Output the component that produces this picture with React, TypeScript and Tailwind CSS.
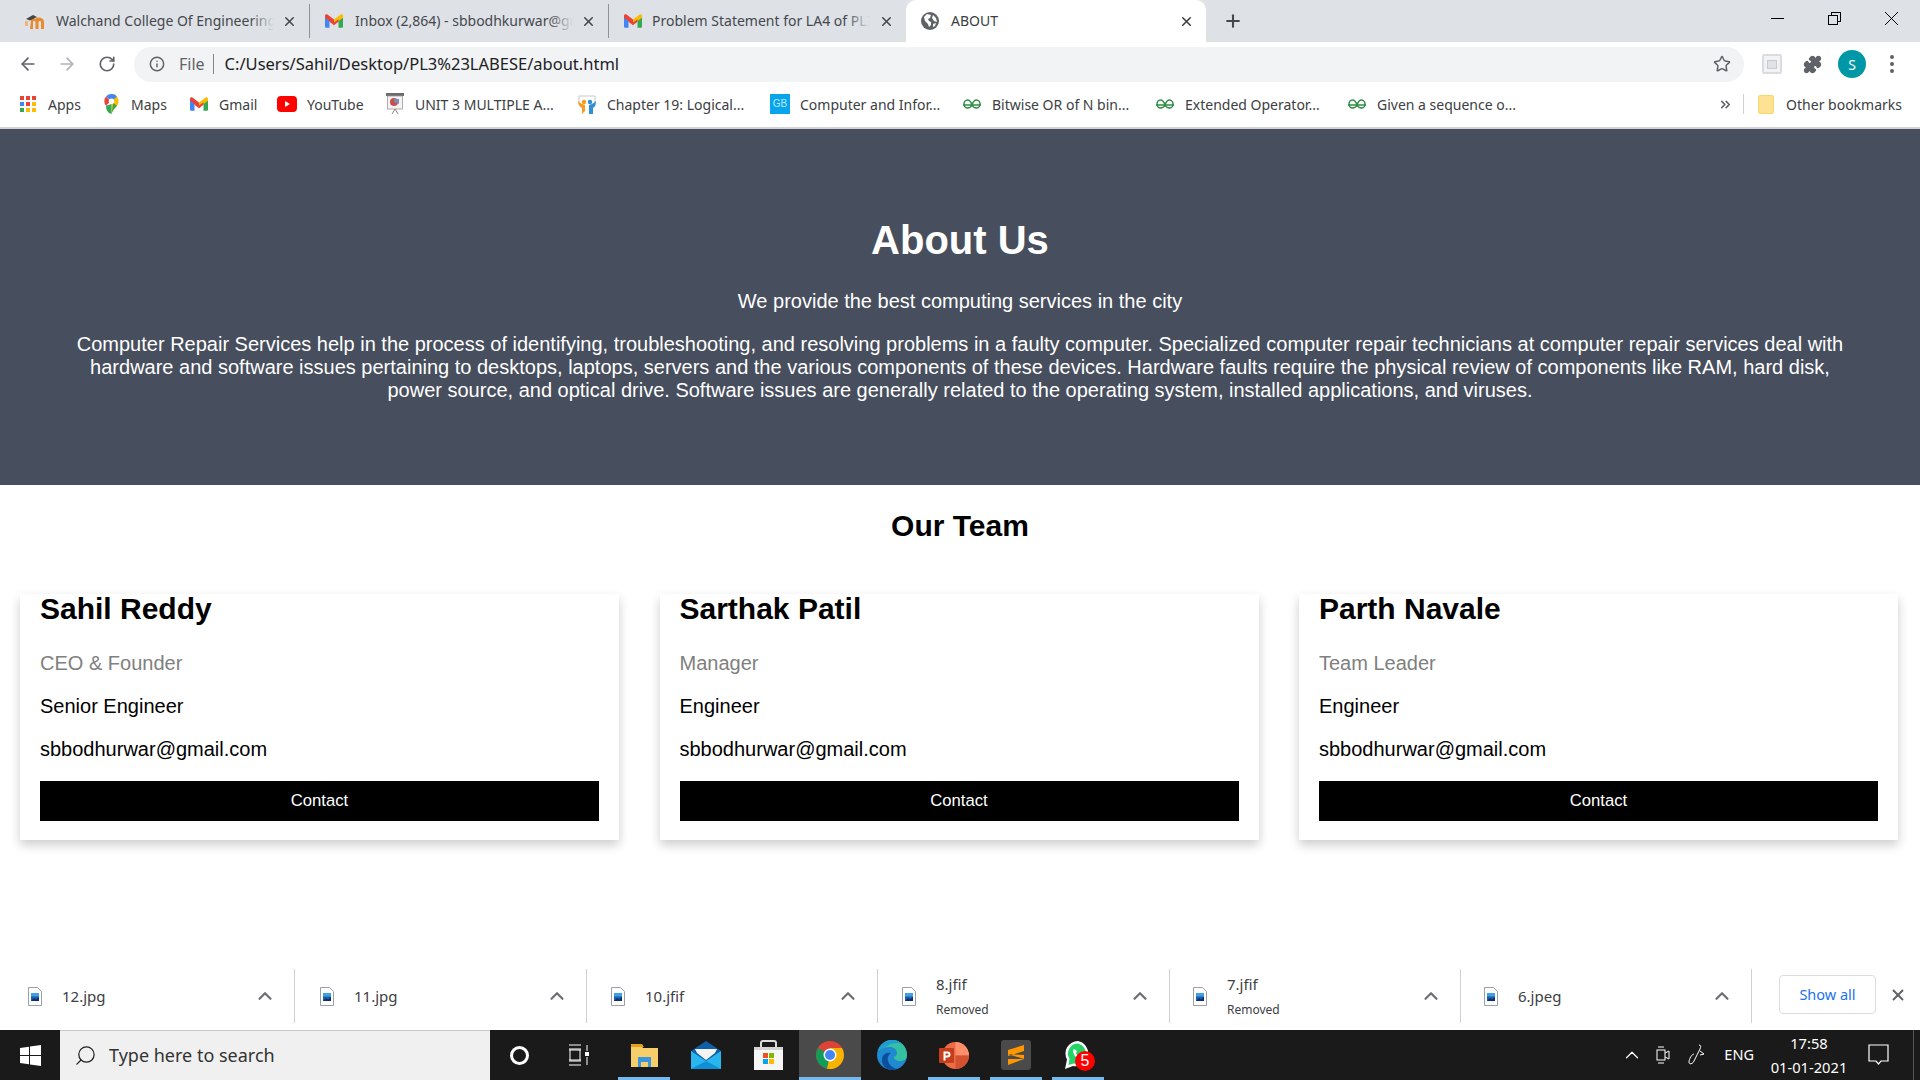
import React from 'react'
import { ArrowLeft, ArrowRight, RotateCw, Info, Star, Puzzle, X, Plus, ChevronUp, Search, ChevronsRight } from 'lucide-react'

const ui = "font-['Noto_Sans','Open_Sans',sans-serif]"
const page = "font-['Liberation_Sans',Arial,sans-serif]"

function GmailIcon({ size = 18 }: { size?: number }) {
  return (
    <svg width={size} height={size * 0.78} viewBox="0 0 24 18" className="shrink-0">
      <path d="M0 3v13.500A1.500 1.500 0 0 0 1.500 18H6V7z" fill="#4285f4" />
      <path d="M24 3v13.500a1.500 1.500 0 0 1-1.500 1.500H18V7z" fill="#34a853" />
      <path d="M6 9 0 4.500V2C0 .3 2-.6 3.300.4L12 7v5z" fill="#ea4335" />
      <path d="M18 9l6-4.500V2c0-1.700-2-2.600-3.300-1.600L12 7v5z" fill="#fbbc04" />
      <path d="M6 6.500l6 4.500 6-4.500V10l-6 4.500L6 10z" fill="#ea4335" />
    </svg>
  )
}

function MoodleIcon() {
  return (
    <svg width="20" height="18" viewBox="0 0 20 18" className="shrink-0">
      <path d="M6 8c1-2 3-2 4-1 1-1 4-2 6-1 2 .8 3 2 3 4v7h-3v-7c0-1.500-2.500-1.500-2.500 0v7h-3v-7c0-1.500-2.500-1.500-2.500 0v7H5z" fill="#e88a2e" />
      <path d="M1 7l7-4 4 2-7 3.500z" fill="#444" />
      <path d="M0 9h3v5H0z" fill="#f3b27a" />
    </svg>
  )
}

function GlobeIcon() {
  return (
    <svg width="18" height="18" viewBox="0 0 18 18" className="shrink-0">
      <circle cx="9" cy="9" r="9" fill="#5f6368" />
      <path d="M3 5l3-3 4 1-1 3-2 1 1 2 2 1v3l-2 2-1-3-3-3zM12 3l3 3 1 4-3-1-2-3zM12 12l3-1-1 3-2 1z" fill="#fff" />
    </svg>
  )
}

function AppsIcon() {
  const colors = ['#ea4335', '#ea4335', '#ea4335', '#4285f4', '#ea4335', '#fbbc04', '#34a853', '#fbbc04', '#fbbc04']
  return (
    <div className="grid grid-cols-3 gap-[2px] w-[17px] shrink-0">
      {colors.map((c, i) => (
        <span key={i} className="w-[4.300px] h-[4.300px]" style={{ backgroundColor: c }} />
      ))}
    </div>
  )
}

function MapsIcon() {
  return (
    <svg width="15" height="20" viewBox="0 0 16 22" className="shrink-0">
      <path d="M8 0a8 8 0 0 1 6 13c-2 2.500-5 5-6 9z" fill="#fbbc04" />
      <path d="M2 13a8 8 0 0 0 6 9V11z" fill="#34a853" />
      <path d="M14 13l-4-3-2 12c1-4 4-6.500 6-9z" fill="#34a853" />
      <path d="M2 2.700A8 8 0 0 0 2 13l5-5z" fill="#ea4335" />
      <path d="M2 2.700A8 8 0 0 1 8 0a8 8 0 0 1 6 2.700L8 8z" fill="#4285f4" />
      <circle cx="8" cy="8" r="3" fill="#fff" />
    </svg>
  )
}

function YoutubeIcon() {
  return (
    <svg width="20" height="16" viewBox="0 0 20 16" className="shrink-0">
      <rect width="20" height="16" rx="4" fill="#f00" />
      <path d="M8 5l5 3-5 3z" fill="#fff" />
    </svg>
  )
}

function SlideIcon() {
  return (
    <svg width="18" height="22" viewBox="0 0 18 22" className="shrink-0">
      <rect x="0" y="0" width="18" height="3" fill="#6b6b6b" />
      <rect x="1.500" y="3" width="15" height="13" fill="#f4f4f4" stroke="#999" strokeWidth=".8" />
      <circle cx="8" cy="9" r="4" fill="#c94f4f" />
      <path d="M8 9V6h5v5z" fill="#7a8fb5" />
      <path d="M9 16l-3 5M9 16l3 5" stroke="#888" />
    </svg>
  )
}

function ChapterIcon() {
  return (
    <svg width="18" height="22" viewBox="0 0 18 22" className="shrink-0">
      <path d="M1 9V3h16v6" fill="none" stroke="#c8c8c8" />
      <path d="M0 8c2 2 4 3 7 4v6c-1 1-2 2-3 3v-6C2 14 0 12 0 8z" fill="#f59a23" />
      <path d="M18 8c-2 2-4 3-7 4v9h4v-6c2-1 3-3 3-7z" fill="#2f8fd8" />
      <circle cx="6" cy="9" r="2.200" fill="#f59a23" />
      <circle cx="12" cy="9" r="2.200" fill="#2f8fd8" />
    </svg>
  )
}

function GfgIcon() {
  return (
    <svg width="18" height="10" viewBox="0 0 18 10" fill="none" stroke="#2f8d46" strokeWidth="1.500" className="shrink-0">
      <path d="M0 6h18" />
      <path d="M9 6C8 3 6 1 4.500 1 2.500 1 1 3 1 5s1.500 4 3.500 4C6.500 9 8 8 9 6c1 2 2.500 3 4.500 3 2 0 3.500-2 3.500-4s-1.500-4-3.500-4C12 1 10 3 9 6" />
    </svg>
  )
}

function BlueSquareIcon() {
  return (
    <div className="w-[20px] h-[20px] bg-[#08a5ec] flex items-center justify-center shrink-0">
      <span className={`${page} text-[#bfe8fb] text-[10px] leading-none`}>GB</span>
    </div>
  )
}

function FileIcon() {
  return (
    <svg width="14" height="19" viewBox="0 0 14 19" className="shrink-0">
      <path d="M.5.500h9l4 4v14H.5z" fill="#fff" stroke="#9aa0a6" />
      <rect x="3" y="6" width="8" height="8" fill="#1a5fa8" />
      <rect x="3" y="6" width="8" height="3.500" fill="#3fa0e8" />
      <path d="M3 14l3-3 2 1.500 3-2.500v4z" fill="#0d2f66" />
    </svg>
  )
}

function Tab({ title, icon }: { title: string; icon: React.ReactNode }) {
  return (
    <div className="w-[299px] h-[34px] flex items-center pl-[15px] pr-[12px] border-r border-[#8f9296]">
      <div className="w-[18px] flex items-center justify-center shrink-0">{icon}</div>
      <div className="relative ml-[12px] -mt-[1px] w-[218px] overflow-hidden whitespace-nowrap text-[14px] text-[#45484d]">
        {title}
        <span className="absolute right-0 top-0 bottom-0 w-[24px] bg-gradient-to-r from-transparent to-[#dee1e6]" />
      </div>
      <X size={15} strokeWidth={2.5} className="ml-auto text-[#45484d]" />
    </div>
  )
}

function TabStrip() {
  return (
    <div className="h-[42px] bg-[#dee1e6] flex items-center pl-[11px] shrink-0">
      <Tab title="Walchand College Of Engineering" icon={<MoodleIcon />} />
      <Tab title="Inbox (2,864) - sbbodhkurwar@gmail.com" icon={<GmailIcon />} />
      <div className="w-[297px] h-[34px] flex items-center pl-[15px] pr-[12px]">
        <div className="w-[18px] flex items-center justify-center shrink-0"><GmailIcon /></div>
        <div className="relative ml-[10px] -mt-[1px] w-[218px] overflow-hidden whitespace-nowrap text-[14px] text-[#45484d]">
          Problem Statement for LA4 of PL3
          <span className="absolute right-0 top-0 bottom-0 w-[24px] bg-gradient-to-r from-transparent to-[#dee1e6]" />
        </div>
        <X size={15} strokeWidth={2.5} className="ml-auto text-[#45484d]" />
      </div>
      <div className="w-[300px] h-[42px] bg-white rounded-t-[10px] flex items-center pl-[15px] pr-[12px]">
        <GlobeIcon />
        <span className="ml-[12px] -mt-[1px] text-[14px] text-[#3c4043]">ABOUT</span>
        <X size={15} strokeWidth={2.5} className="ml-auto text-[#3c4043]" />
      </div>
      <Plus size={20} strokeWidth={2.5} className="ml-[17px] text-[#45484d]" />
      <div className="ml-auto h-[42px] flex items-center pb-[6px] pr-[22px] gap-[44px]">
        <span className="w-[13px] h-px bg-black" />
        <div className="relative w-[13px] h-[13px]">
          <span className="absolute left-[3px] top-0 w-[10px] h-[10px] border border-black" />
          <span className="absolute left-0 top-[3px] w-[10px] h-[10px] border border-black bg-[#dee1e6]" />
        </div>
        <svg width="13" height="13" viewBox="0 0 13 13" stroke="#000" strokeWidth="1">
          <path d="M0 0l13 13M13 0L0 13" />
        </svg>
      </div>
    </div>
  )
}

function Toolbar() {
  return (
    <div className="h-[44px] bg-white flex items-center shrink-0 pl-[18px]">
      <ArrowLeft size={20} className="text-[#5f6368]" />
      <ArrowRight size={20} className="text-[#b0b3b8] ml-[19px]" />
      <RotateCw size={18} strokeWidth={2.2} className="text-[#5f6368] ml-[21px]" />
      <div className="ml-[18px] w-[1610px] h-[35px] rounded-full bg-[#f1f3f4] flex items-center pl-[15px] pr-[13px]">
        <Info size={16} strokeWidth={2.2} className="text-[#5f6368]" />
        <span className="ml-[14px] text-[16px] text-[#5f6368]">File</span>
        <span className="ml-[8px] w-px h-[20px] bg-[#80868b]" />
        <span className="ml-[11px] text-[16.500px] text-[#202124]">C:/Users/Sahil/Desktop/PL3%23LABESE/about.html</span>
        <Star size={18} strokeWidth={2} className="ml-auto text-[#5f6368]" />
      </div>
      <div className="ml-[18px] w-[20px] h-[20px] border-2 border-[#dadce0] rounded-[2px] bg-[#f1f3f4] flex items-center justify-center">
        <span className="w-[10px] h-[9px] bg-[#dfe3e6] border border-[#c8ccd0]" />
      </div>
      <Puzzle size={19} fill="#5f6368" className="ml-[21px] text-[#5f6368]" />
      <div className="ml-[16px] w-[28px] h-[28px] rounded-full bg-[#0097a7] flex items-center justify-center text-white text-[14px]">S</div>
      <div className="ml-[24px] flex flex-col gap-[3px]">
        <span className="w-[4px] h-[4px] rounded-full bg-[#5f6368]" />
        <span className="w-[4px] h-[4px] rounded-full bg-[#5f6368]" />
        <span className="w-[4px] h-[4px] rounded-full bg-[#5f6368]" />
      </div>
    </div>
  )
}

function Bookmark({ icon, label, className }: { icon: React.ReactNode; label: string; className: string }) {
  return (
    <div className={`flex items-center ${className}`}>
      <div className="w-[20px] flex items-center justify-center shrink-0">{icon}</div>
      <span className="ml-[10px] text-[14px] text-[#3c4043] whitespace-nowrap">{label}</span>
    </div>
  )
}

function BookmarksBar() {
  return (
    <div className="h-[43px] bg-white border-b-2 border-[#d3d3d5] flex items-center shrink-0 pl-[18px] pb-[5px]">
      <Bookmark icon={<AppsIcon />} label="Apps" className="w-[83px]" />
      <Bookmark icon={<MapsIcon />} label="Maps" className="w-[88px]" />
      <Bookmark icon={<GmailIcon />} label="Gmail" className="w-[88px]" />
      <Bookmark icon={<YoutubeIcon />} label="YouTube" className="w-[108px]" />
      <Bookmark icon={<SlideIcon />} label="UNIT 3 MULTIPLE A..." className="w-[192px]" />
      <Bookmark icon={<ChapterIcon />} label="Chapter 19: Logical..." className="w-[193px]" />
      <Bookmark icon={<BlueSquareIcon />} label="Computer and Infor..." className="w-[192px]" />
      <Bookmark icon={<GfgIcon />} label="Bitwise OR of N bin..." className="w-[193px]" />
      <Bookmark icon={<GfgIcon />} label="Extended Operator..." className="w-[192px]" />
      <Bookmark icon={<GfgIcon />} label="Given a sequence o..." className="w-[200px]" />
      <ChevronsRight size={15} strokeWidth={2.5} className="ml-auto text-[#5f6368]" />
      <span className="ml-[10px] w-px h-[20px] bg-[#d0d2d5]" />
      <div className="ml-[14px] w-[16px] h-[19px] rounded-[2px] bg-[#fde293] border border-[#fbd668]" />
      <span className="ml-[12px] mr-[18px] text-[14px] text-[#3c4043]">Other bookmarks</span>
    </div>
  )
}

const team = [
  { name: 'Sahil Reddy', role: 'CEO & Founder', title: 'Senior Engineer' },
  { name: 'Sarthak Patil', role: 'Manager', title: 'Engineer' },
  { name: 'Parth Navale', role: 'Team Leader', title: 'Engineer' },
]

function TeamCard({ name, role, title }: { name: string; role: string; title: string }) {
  return (
    <div className="w-[599px] h-[246px] bg-white shadow-[0_5px_10px_rgba(0,0,0,0.2)] px-[20px]">
      <h2 className="text-[30px] leading-[35px] font-bold text-black -mt-[3px]">{name}</h2>
      <p className="mt-[26px] text-[20px] leading-[23px] text-[#808080]">{role}</p>
      <p className="mt-[20px] text-[20px] leading-[23px] text-black">{title}</p>
      <p className="mt-[20px] text-[20px] leading-[23px] text-black">sbbodhurwar@gmail.com</p>
      <button className="mt-[20px] w-full h-[40px] pb-[2px] bg-black text-white text-[16.670px]">Contact</button>
    </div>
  )
}

function Main() {
  return (
    <div className={`flex-1 min-h-0 bg-white ${page}`}>
      <div className="h-[356px] bg-[#474e5d] text-white text-center flex flex-col items-center pt-[88px] px-[50px]">
        <h1 className="text-[40px] leading-[46px] font-bold">About Us</h1>
        <p className="mt-[27px] text-[20px] leading-[23px]">We provide the best computing services in the city</p>
        <p className="mt-[20px] text-[20px] leading-[23px] px-[20px]">
          Computer Repair Services help in the process of identifying, troubleshooting, and resolving problems in a faulty computer. Specialized computer repair technicians at computer repair services deal with hardware and software issues pertaining to desktops, laptops, servers and the various components of these devices. Hardware faults require the physical review of components like RAM, hard disk, power source, and optical drive. Software issues are generally related to the operating system, installed applications, and viruses.
        </p>
      </div>
      <h2 className="mt-[23px] text-[30px] leading-[35px] font-bold text-center text-black">Our Team</h2>
      <div className="mt-[51px] flex justify-between pl-[20px] pr-[22px]">
        {team.map(m => (
          <TeamCard key={m.name} {...m} />
        ))}
      </div>
    </div>
  )
}

const downloads = [
  { name: '12.jpg', w: 'w-[295px] pl-[28px]' },
  { name: '11.jpg', w: 'w-[292px] pl-[25px]' },
  { name: '10.jfif', w: 'w-[291px] pl-[24px]' },
  { name: '8.jfif', removed: true, w: 'w-[292px] pl-[24px]' },
  { name: '7.jfif', removed: true, w: 'w-[291px] pl-[23px]' },
  { name: '6.jpeg', w: 'w-[291px] pl-[23px]' },
]

function DownloadBar() {
  return (
    <div className={`h-[70px] bg-white flex items-start shrink-0 pt-[9px] ${ui}`}>
      {downloads.map(d => (
        <div key={d.name} className={`${d.w} h-[54px] flex items-center pr-[18px] border-r border-[#cfd1d3]`}>
          <FileIcon />
          <div className="ml-[20px] flex flex-col">
            <span className="text-[15px] leading-[20px] text-[#3c4043]">{d.name}</span>
            {d.removed && <span className="mt-[8px] text-[12px] leading-[16px] text-[#3c4043]">Removed</span>}
          </div>
          <ChevronUp size={22} strokeWidth={2.4} className="ml-auto text-[#6b6f73]" />
        </div>
      ))}
      <div className="ml-[27px] w-[97px] h-[39px] mt-[6px] rounded-[4px] border border-[#dadce0] flex items-center justify-center text-[14.500px] text-[#1a73e8]">Show all</div>
      <X size={18} strokeWidth={2.5} className="ml-[13px] mt-[17px] text-[#5f6368]" />
    </div>
  )
}

function Cell({ active, on, children }: { active?: boolean; on?: boolean; children: React.ReactNode }) {
  return (
    <div className={`relative w-[62px] h-[50px] flex items-center justify-center ${active ? 'bg-[#4a4a4a]' : ''}`}>
      {children}
      {on && <span className={`absolute bottom-0 h-[3px] bg-[#76b9ed] ${active ? 'left-0 right-0' : 'left-[5px] right-[5px]'}`} />}
    </div>
  )
}

function Taskbar() {
  return (
    <div className={`h-[50px] bg-[#1a1a1a] flex items-center shrink-0 ${ui}`}>
      <div className="w-[60px] flex justify-center">
        <svg width="21" height="21" viewBox="0 0 21 21" fill="#fff">
          <path d="M0 3l9-1.300V10H0zM10 1.500L21 0v10H10zM0 11h9v8.300L0 18zM10 11h11v10l-11-1.500z" />
        </svg>
      </div>
      <div className="w-[430px] h-[50px] bg-[#f0f0f0] border-t border-[#c8c8c8] flex items-center pl-[14px]">
        <Search size={23} strokeWidth={1.3} className="text-[#222] -scale-x-100" />
        <span className="ml-[12px] text-[18px] text-[#333]">Type here to search</span>
      </div>
      <div className="w-[58px] flex justify-center">
        <span className="w-[19px] h-[19px] rounded-full border-[3px] border-white" />
      </div>
      <div className="w-[62px] flex justify-center">
        <svg width="22" height="22" viewBox="0 0 22 22" fill="none" stroke="#fff" strokeWidth="1">
          <path d="M1 1h12M1 5h12M1 17h12M1 21h12M2 6v10M12 6v10M1 6h12M1 16h12M19 1v6M19 13v8" />
          <rect x="17.500" y="8.500" width="3" height="3" fill="#fff" />
        </svg>
      </div>
      <div className="flex ml-[3px]">
        <Cell on>
          <svg width="27" height="23" viewBox="0 0 27 23">
            <path d="M0 1h10l2 3h15v19H0z" fill="#f7cf6a" />
            <path d="M0 0h11l2 3H0z" fill="#e3a21a" />
            <path d="M7 13h13v10h-3v-5h-7v5H7z" fill="#3a96dd" />
          </svg>
        </Cell>
        <Cell>
          <svg width="30" height="28" viewBox="0 0 30 28">
            <path d="M15 0l15 10v18H0V10z" fill="#0f5fa8" />
            <path d="M4 8h22l-2 4-9 7-9-7z" fill="#f3f3f3" />
            <path d="M0 10l15 10 15-10v18H0z" fill="#29b6ee" />
            <path d="M0 28l15-8 15 8z" fill="#0f8fd6" />
          </svg>
        </Cell>
        <Cell>
          <svg width="29" height="30" viewBox="0 0 29 30">
            <path d="M7 8V3a2 2 0 0 1 2-2h11a2 2 0 0 1 2 2v5" fill="none" stroke="#ddd" strokeWidth="2" />
            <path d="M0 7h29v23H0z" fill="#f6f6f6" />
            <path d="M0 7h29v3H0z" fill="#d5d5d5" />
            <rect x="9" y="13" width="5" height="5" fill="#f25022" />
            <rect x="15" y="13" width="5" height="5" fill="#7fba00" />
            <rect x="9" y="19" width="5" height="5" fill="#00a4ef" />
            <rect x="15" y="19" width="5" height="5" fill="#ffb900" />
          </svg>
        </Cell>
        <Cell active on>
          <svg width="28" height="28" viewBox="0 0 28 28">
            <circle cx="14" cy="14" r="14" fill="#db4437" />
            <path d="M14 14L2 7a14 14 0 0 0 9 20.700z" fill="#0f9d58" />
            <path d="M14 14l-3 13.700A14 14 0 0 0 28 14 14 14 0 0 0 26 7H14z" fill="#f4b400" />
            <circle cx="14" cy="14" r="6.500" fill="#fff" />
            <circle cx="14" cy="14" r="5" fill="#4285f4" />
          </svg>
        </Cell>
        <Cell>
          <svg width="30" height="30" viewBox="0 0 30 30">
            <circle cx="15" cy="15" r="15" fill="#1f8ad2" />
            <path d="M1 11C3 4 9 0 15 0c9 0 15 7 15 15 0 4-3 6-7 6s-6-2-6-4c2-1 3-2 3-4 0-4-4-6-7-6-5 0-10 1-12 4z" fill="#35c1a0" />
            <path d="M1 11C3 4 9 0 15 0c4 0 8 1.500 10 4-5-2-11-1-15 2-3 1.500-7 2-9 5z" fill="#1f9bd6" />
            <path d="M15 30C8 30 4 24 5 18c1-4 5-6 9-5-3 2-4 5-3 8 1 4 5 7 9 8-1.500.6-3 1-5 1z" fill="#0c4f9c" />
          </svg>
        </Cell>
        <Cell on>
          <svg width="30" height="27" viewBox="0 0 30 27">
            <circle cx="16.500" cy="13.500" r="13.500" fill="#ed6c47" />
            <path d="M16.500 0A13.500 13.500 0 0 1 30 13.500H16.500z" fill="#ff8f6b" />
            <path d="M16.500 13.500H30A13.500 13.500 0 0 1 16.500 27z" fill="#d35230" />
            <rect x="0" y="6" width="15" height="15" rx="1" fill="#c43e1c" />
            <path d="M4.500 9.500h4a3 3 0 0 1 0 6h-2v3h-2zM6.500 11.500v2h2a1 1 0 0 0 0-2z" fill="#fff" />
          </svg>
        </Cell>
        <Cell on>
          <svg width="30" height="30" viewBox="0 0 30 30">
            <rect width="30" height="30" rx="3" fill="#4a4a4a" />
            <path d="M23 5v6L7 16v-6zM7 14l16 5v-4zM23 19L7 25v-6z" fill="#ff9800" />
          </svg>
        </Cell>
        <Cell on>
          <div className="relative ml-[4px] w-[30px] h-[28px]">
            <svg width="26" height="28" viewBox="0 0 26 28">
              <path d="M13 0a12.500 12.500 0 0 0-11 18.500L0 28l8-3a12.500 12.500 0 1 0 5-25z" fill="#fff" />
              <path d="M13 2.500a10 10 0 0 0-8.500 15.300L3.500 24l5-1.500A10 10 0 1 0 13 2.500z" fill="#25d366" />
              <path d="M9 8c-2 2 0 6 2 8s5 3 7 1l-2-3-2 1c-1 0-3-2-3-3l1-2z" fill="#fff" />
            </svg>
            <span className={`absolute right-0 -bottom-[2px] w-[20px] h-[20px] rounded-full bg-[#f00] text-white text-[16px] leading-[20px] text-center ${page}`}>5</span>
          </div>
        </Cell>
      </div>
      <div className="ml-auto flex items-center text-white">
        <ChevronUp size={22} strokeWidth={1.300} />
        <svg width="14" height="20" viewBox="0 0 14 20" fill="none" stroke="#fff" className="ml-[13px]">
          <rect x="1" y="5" width="8" height="10" />
          <path d="M9 8l4-2v8l-4-2M2 2h6M2 18h6" />
        </svg>
        <svg width="20" height="24" viewBox="0 0 20 24" fill="none" stroke="#fff" className="ml-[16px]">
          <path d="M13 2c2 0 2 2 1 4l-6 12c-1 3-5 4-5 1s3-8 5-8M14 8l4 3-4 1" />
        </svg>
        <span className="ml-[18px] text-[14.500px]">ENG</span>
        <div className="ml-[16px] flex flex-col items-center whitespace-nowrap text-[14.700px] leading-[24px] w-[78px]">
          <span>17:58</span>
          <span>01-01-2021</span>
        </div>
        <svg width="21" height="22" viewBox="0 0 21 22" fill="none" stroke="#fff" strokeWidth="1.200" className="ml-[20px]">
          <path d="M1 1h19v16h-7l-2.500 3L8 17H1z" />
        </svg>
        <span className="ml-[24px] w-px h-[50px] bg-[#555] mr-[6px]" />
      </div>
    </div>
  )
}

export default function App() {
  return (
    <div className={`w-[1920px] h-[1080px] overflow-hidden flex flex-col ${ui}`}>
      <TabStrip />
      <Toolbar />
      <BookmarksBar />
      <Main />
      <DownloadBar />
      <Taskbar />
    </div>
  )
}
